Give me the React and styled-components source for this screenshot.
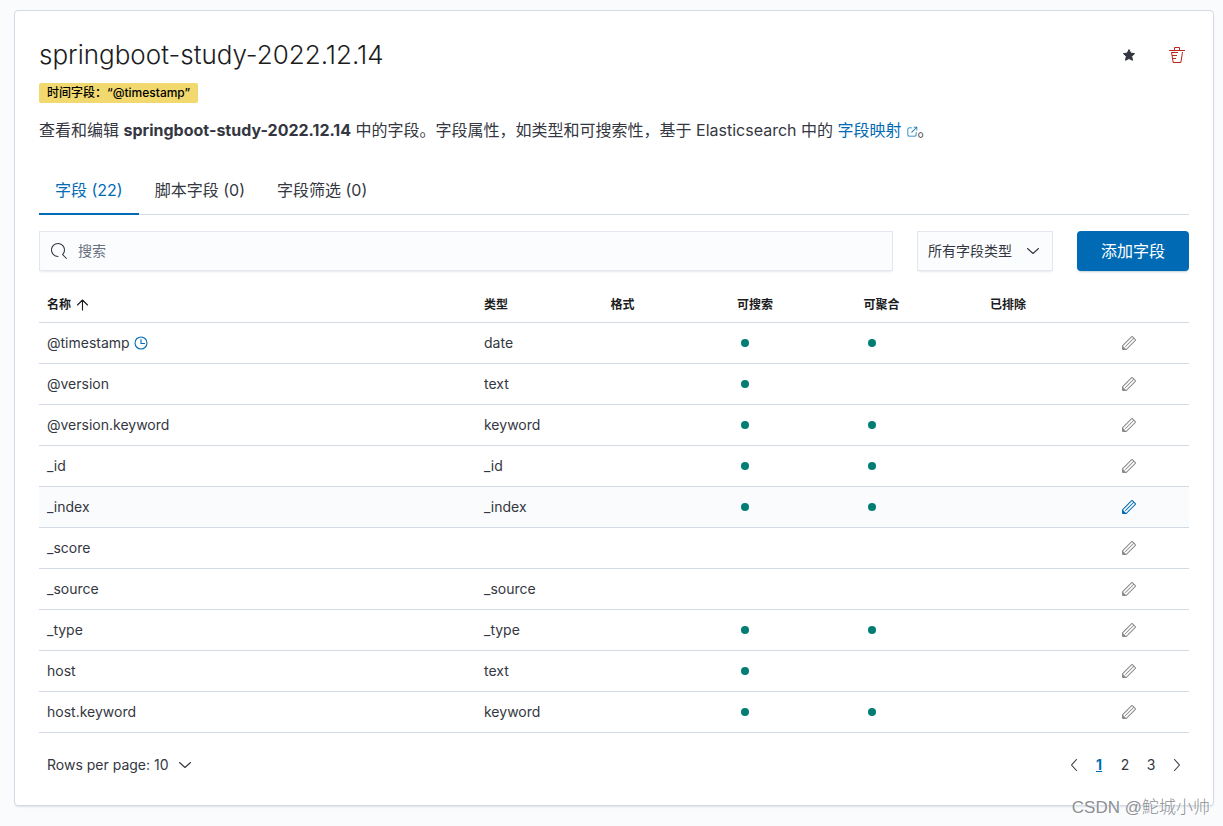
import React, { useState } from 'react';
import styled, { createGlobalStyle, css } from 'styled-components';

const GlobalStyle = createGlobalStyle`
  *, *::before, *::after {
    box-sizing: border-box;
  }

  body {
    margin: 0;
    background-color: #fafbfd;
    color: #343741;
    font-family: Inter, 'Noto Sans CJK SC', sans-serif;
    font-size: 14px;
    line-height: 24px;
  }

  button, input, select {
    font: inherit;
    color: inherit;
  }
`;

// Page
const Page = styled.main`
  position: relative;
  padding: 10px 9px 20px 14px;
`;

const Panel = styled.section`
  padding: 24px;
  background-color: #fff;
  border: 1px solid #d3dae6;
  border-radius: 4px;
  box-shadow: 0 2px 2px -1px rgba(152, 162, 179, 0.3);
`;

const Watermark = styled.div`
  position: absolute;
  right: 13px;
  bottom: 6px;
  color: #8d8f94;
  font-family: 'Liberation Sans', 'Noto Sans CJK SC', sans-serif;
  font-size: 17px;
  font-weight: 300;
  text-shadow: 1px 1px 1px #fff;
  pointer-events: none;
`;

// Header
const Header = styled.header`
  display: flex;
  justify-content: space-between;
  align-items: center;
`;

const Title = styled.h1`
  margin: 0;
  color: #1a1c21;
  font-size: 26px;
  font-weight: 300;
  line-height: 40px;
`;

const HeaderActions = styled.div`
  display: flex;
  gap: 24px;
`;

const IconButton = styled.button`
  display: flex;
  align-items: center;
  justify-content: center;
  width: 24px;
  height: 24px;
  padding: 0;
  border: 0;
  background: none;
  color: ${({ $color }) => $color || '#343741'};
  cursor: pointer;
`;

const Badge = styled.span`
  display: block;
  width: fit-content;
  margin-top: 8px;
  padding: 0 8px;
  border-radius: 2px;
  background-color: #f1d86f;
  color: #000;
  font-size: 12px;
  font-weight: 500;
  line-height: 20px;
`;

const Description = styled.p`
  margin: 15px 0 25px;
  font-size: 16px;
  line-height: 24px;
`;

const DocLink = styled.a`
  color: #006bb4;
  text-decoration: none;

  svg {
    margin-left: 4px;
    vertical-align: -2px;
  }
`;

// Tabs
const Tabs = styled.div`
  display: flex;
  margin-bottom: 16px;
  box-shadow: inset 0 -1px 0 #d3dae6;
`;

const Tab = styled.button`
  padding: 11px 16px 13px;
  border: 0;
  background: none;
  font-size: 16px;
  line-height: 24px;
  cursor: pointer;

  ${({ $active }) =>
    $active &&
    css`
      color: #006bb4;
      box-shadow: inset 0 -2px 0 #006bb4;
    `}
`;

// Filter bar
const FilterBar = styled.div`
  display: flex;
  gap: 24px;
  margin-bottom: 16px;
`;

const controlStyle = css`
  height: 40px;
  border: 1px solid #e3e6ee;
  background-color: #fbfcfd;
  box-shadow: 0 1px 1px -1px rgba(152, 162, 179, 0.2), 0 3px 2px -2px rgba(152, 162, 179, 0.2);
`;

const SearchBox = styled.label`
  ${controlStyle}
  display: flex;
  flex: 1;
  align-items: center;
  gap: 11px;
  padding: 0 11px;
`;

const SearchInput = styled.input`
  flex: 1;
  min-width: 0;
  padding: 0;
  border: 0;
  outline: 0;
  background: none;

  &::placeholder {
    color: #69707d;
    opacity: 1;
  }
`;

const SelectWrap = styled.div`
  position: relative;

  svg {
    position: absolute;
    top: 12px;
    right: 12px;
    pointer-events: none;
  }
`;

const TypeSelect = styled.select`
  ${controlStyle}
  width: 136px;
  padding: 0 10px;
  border-radius: 0;
  appearance: none;
`;

const AddButton = styled.button`
  width: 112px;
  height: 40px;
  padding: 0;
  border: 0;
  border-radius: 4px;
  background-color: #006bb4;
  box-shadow: 0 2px 2px -1px rgba(54, 97, 126, 0.3);
  color: #fff;
  font-size: 16px;
  cursor: pointer;
`;

// Table
const Table = styled.table`
  width: 100%;
  border-collapse: separate;
  border-spacing: 0;
  table-layout: fixed;
`;

const HeadCell = styled.th`
  width: ${({ $width }) => $width};
  height: 36px;
  padding: 0 8px;
  border-bottom: 1px solid #d3dae6;
  color: #1a1c21;
  font-size: 12px;
  font-weight: 700;
  line-height: 18px;
  text-align: left;

  svg {
    margin-left: 4px;
    vertical-align: -4px;
  }
`;

const Row = styled.tr`
  background-color: ${({ $hovered }) => ($hovered ? '#fafbfd' : 'transparent')};
`;

const Cell = styled.td`
  height: 41px;
  padding: 0 8px;
  border-bottom: 1px solid #d3dae6;
  line-height: 24px;
`;

const FieldName = styled.span`
  display: flex;
  align-items: center;
  gap: 3px;

  svg {
    color: #006bb4;
  }
`;

const Dot = styled.span`
  display: block;
  width: 8px;
  height: 8px;
  margin-left: 4px;
  border-radius: 50%;
  background-color: #017d73;
`;

// Footer
const Footer = styled.footer`
  display: flex;
  justify-content: space-between;
  align-items: center;
  height: 32px;
  margin-top: 16px;
`;

const RowsButton = styled.button`
  display: inline-flex;
  align-items: center;
  gap: 8px;
  padding: 0 8px;
  border: 0;
  background: none;
  cursor: pointer;
`;

const Pagination = styled.nav`
  display: flex;
  gap: 2px;
`;

const PageButton = styled(IconButton)`
  ${({ $active }) =>
    $active &&
    css`
      color: #006bb4;
      font-weight: 700;
      text-decoration: underline;
    `}
`;

// Icons
const Icon = ({ size = 16, children }) => (
  <svg width={size} height={size} viewBox="0 0 16 16" fill="currentColor" aria-hidden="true">
    {children}
  </svg>
);

const LineIcon = ({ d, size }) => (
  <Icon size={size}>
    <path
      d={d}
      fill="none"
      stroke="currentColor"
      strokeWidth="1.1"
      strokeLinecap="round"
      strokeLinejoin="round"
    />
  </Icon>
);

const StarIcon = () => (
  <Icon>
    <path
      d="M8 2.6l1.7 3.5 3.9.5-2.9 2.7.8 4L8 11.5l-3.5 1.8.8-4-2.9-2.7 3.9-.5z"
      stroke="currentColor"
      strokeLinejoin="round"
    />
  </Icon>
);

const TrashIcon = () => (
  <Icon>
    <path
      fillRule="evenodd"
      d="M11 3h5v1H0V3h5V1a1 1 0 011-1h4a1 1 0 011 1v2zm-7.056 8H7v1H4.1l.392 2.519c.042.269.254.458.493.458h6.03c.239 0 .451-.189.493-.458l1.498-9.576H14l-1.504 9.73c-.116.747-.74 1.304-1.481 1.304h-6.03c-.741 0-1.365-.557-1.481-1.304l-1.511-9.73H9V5.95H3.157L3.476 8H8v1H3.632l.312 2zM6 3h4V1H6v2z"
    />
  </Icon>
);

const PopoutIcon = () => (
  <Icon size={12}>
    <path d="M13 8.5a.5.5 0 111 0V12a2 2 0 01-2 2H4a2 2 0 01-2-2V4a2 2 0 012-2h3.5a.5.5 0 010 1H4a1 1 0 00-1 1v8a1 1 0 001 1h8a1 1 0 001-1V8.5zm-5.12.339a.5.5 0 11-.706-.707L13.305 2H10.5a.5.5 0 110-1H14a1 1 0 011 1v3.5a.5.5 0 11-1 0V2.72L7.88 8.838z" />
  </Icon>
);

const SearchIcon = () => (
  <Icon>
    <path d="M11.271 11.978l3.872 3.873a.502.502 0 00.708 0 .502.502 0 000-.708l-3.565-3.564c2.38-2.747 2.267-6.923-.342-9.532-2.73-2.73-7.17-2.73-9.898 0-2.728 2.729-2.728 7.17 0 9.9a6.955 6.955 0 004.949 2.05.5.5 0 000-1 5.96 5.96 0 01-4.242-1.757 6.01 6.01 0 010-8.486 6.004 6.004 0 018.484 0 6.01 6.01 0 010 8.486.5.5 0 00.034.738z" />
  </Icon>
);

const PencilIcon = () => (
  <Icon>
    <path d="M12.148 3.148L11 2l-9 9v3h3l9-9-1.144-1.144-8.002 7.998a.502.502 0 01-.708 0 .502.502 0 010-.708l8.002-7.998zM11 1c.256 0 .512.098.707.293l3 3a.999.999 0 010 1.414l-9 9A.997.997 0 015 15H2a1 1 0 01-1-1v-3c0-.265.105-.52.293-.707l9-9A.997.997 0 0111 1zM5 14H2v-3l3 3z" />
  </Icon>
);

const ClockIcon = () => <LineIcon d="M8 2a6 6 0 100 12A6 6 0 008 2zM8 4.5v4h3.5" />;
const ChevronDown = () => <LineIcon d="M2.5 5.5l5.5 5 5.5-5" />;
const ChevronLeft = () => <LineIcon d="M11.5 2.5l-5 5.5 5 5.5" />;
const ChevronRight = () => <LineIcon d="M5.5 2.5l5 5.5-5 5.5" />;
const SortUpIcon = () => <LineIcon d="M7.5 13V3M2.5 8l5-5 5 5" />;

const columns = [
  { label: '名称', width: '38%', sorted: true },
  { label: '类型', width: '11%' },
  { label: '格式', width: '11%' },
  { label: '可搜索', width: '11%' },
  { label: '可聚合', width: '11%' },
  { label: '已排除', width: '11%' },
];

const fields = [
  { name: '@timestamp', type: 'date', searchable: true, aggregatable: true, time: true },
  { name: '@version', type: 'text', searchable: true },
  { name: '@version.keyword', type: 'keyword', searchable: true, aggregatable: true },
  { name: '_id', type: '_id', searchable: true, aggregatable: true },
  { name: '_index', type: '_index', searchable: true, aggregatable: true },
  { name: '_score', type: '' },
  { name: '_source', type: '_source' },
  { name: '_type', type: '_type', searchable: true, aggregatable: true },
  { name: 'host', type: 'text', searchable: true },
  { name: 'host.keyword', type: 'keyword', searchable: true, aggregatable: true },
];

const tabs = ['字段 (22)', '脚本字段 (0)', '字段筛选 (0)'];

export default function App() {
  const [activeTab, setActiveTab] = useState(0);
  const [page, setPage] = useState(1);
  const [hovered, setHovered] = useState('_index');

  return (
    <>
      <GlobalStyle />
      <Page>
        <Panel>
          <Header>
            <Title>springboot-study-2022.12.14</Title>
            <HeaderActions>
              <IconButton aria-label="设为默认索引"><StarIcon /></IconButton>
              <IconButton aria-label="移除索引模式" $color="#bd271e"><TrashIcon /></IconButton>
            </HeaderActions>
          </Header>
          <Badge>时间字段：“@timestamp”</Badge>
          <Description>
            查看和编辑 <strong>springboot-study-2022.12.14</strong>{' '}
            中的字段。字段属性，如类型和可搜索性，基于 Elasticsearch 中的{' '}
            <DocLink href="#mapping">字段映射<PopoutIcon /></DocLink>。
          </Description>

          {/* Tabs */}
          <Tabs role="tablist">
            {tabs.map((tab, index) => (
              <Tab
                key={tab}
                role="tab"
                aria-selected={activeTab === index}
                $active={activeTab === index}
                onClick={() => setActiveTab(index)}
              >
                {tab}
              </Tab>
            ))}
          </Tabs>

          {/* Filters */}
          <FilterBar>
            <SearchBox>
              <SearchIcon />
              <SearchInput type="text" placeholder="搜索" aria-label="搜索" />
            </SearchBox>
            <SelectWrap>
              <TypeSelect aria-label="所有字段类型">
                <option>所有字段类型</option>
                <option>date</option>
                <option>text</option>
                <option>keyword</option>
              </TypeSelect>
              <ChevronDown />
            </SelectWrap>
            <AddButton>添加字段</AddButton>
          </FilterBar>

          {/* Fields */}
          <Table>
            <thead>
              <tr>
                {columns.map((column) => (
                  <HeadCell key={column.label} $width={column.width} scope="col">
                    {column.label}
                    {column.sorted && <SortUpIcon />}
                  </HeadCell>
                ))}
                <HeadCell $width="7%" aria-label="操作" />
              </tr>
            </thead>
            <tbody>
              {fields.map((field) => (
                <Row
                  key={field.name}
                  $hovered={hovered === field.name}
                  onMouseEnter={() => setHovered(field.name)}
                >
                  <Cell>
                    <FieldName>
                      {field.name}
                      {field.time && <ClockIcon />}
                    </FieldName>
                  </Cell>
                  <Cell>{field.type}</Cell>
                  <Cell />
                  <Cell>{field.searchable && <Dot />}</Cell>
                  <Cell>{field.aggregatable && <Dot />}</Cell>
                  <Cell />
                  <Cell>
                    <IconButton
                      aria-label={`编辑 ${field.name}`}
                      $color={hovered === field.name ? '#006bb4' : '#8a8a8a'}
                    >
                      <PencilIcon />
                    </IconButton>
                  </Cell>
                </Row>
              ))}
            </tbody>
          </Table>

          {/* Footer */}
          <Footer>
            <RowsButton>
              Rows per page: 10
              <ChevronDown />
            </RowsButton>
            <Pagination aria-label="分页">
              <PageButton aria-label="上一页"><ChevronLeft /></PageButton>
              {[1, 2, 3].map((number) => (
                <PageButton key={number} $active={page === number} onClick={() => setPage(number)}>
                  {number}
                </PageButton>
              ))}
              <PageButton aria-label="下一页"><ChevronRight /></PageButton>
            </Pagination>
          </Footer>
        </Panel>
        <Watermark>CSDN @鮀城小帅</Watermark>
      </Page>
    </>
  );
}
